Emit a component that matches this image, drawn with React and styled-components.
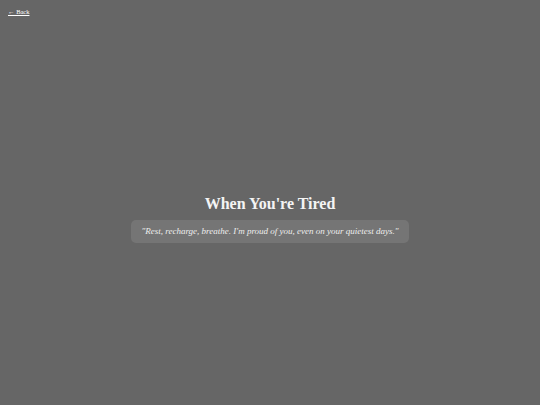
import React from 'react'
import styled, { createGlobalStyle } from 'styled-components'

const Global = createGlobalStyle`
html, body {
  margin: 0;
  padding: 0;
  background: #666666;
}
body {
  font-family: "Liberation Serif", "DejaVu Serif", serif;
  color: #ffffff;
}
`

const Page = styled.div`
min-height: 100vh;
box-sizing: border-box;
display: flex;
flex-direction: column;
padding: 8px 8px 0 8px;
`

const BackLink = styled.a`
align-self: flex-start;
color: #ffffff;
font-size: 6.5px;
text-decoration: underline;
cursor: pointer;
line-height: 8px;
`

const Main = styled.main`
flex: 1;
display: flex;
flex-direction: column;
align-items: center;
justify-content: center;
padding-top: 17px;
`

const Title = styled.h1`
margin: 0 0 7px 0;
font-size: 16px;
line-height: 18px;
font-weight: bold;
color: #f4f4f4;
`

const Quote = styled.div`
background: rgba(255, 255, 255, 0.1);
border-radius: 5px;
padding: 6px 10px;
font-size: 9px;
line-height: 11px;
font-style: italic;
color: #eeeeee;
`

export default function App() {
  return (
    <>
      <Global />
      <Page>
        <BackLink href="#">← Back</BackLink>
        <Main>
          <Title>When You're Tired</Title>
          <Quote>"Rest, recharge, breathe. I'm proud of you, even on your quietest days."</Quote>
        </Main>
      </Page>
    </>
  )
}
